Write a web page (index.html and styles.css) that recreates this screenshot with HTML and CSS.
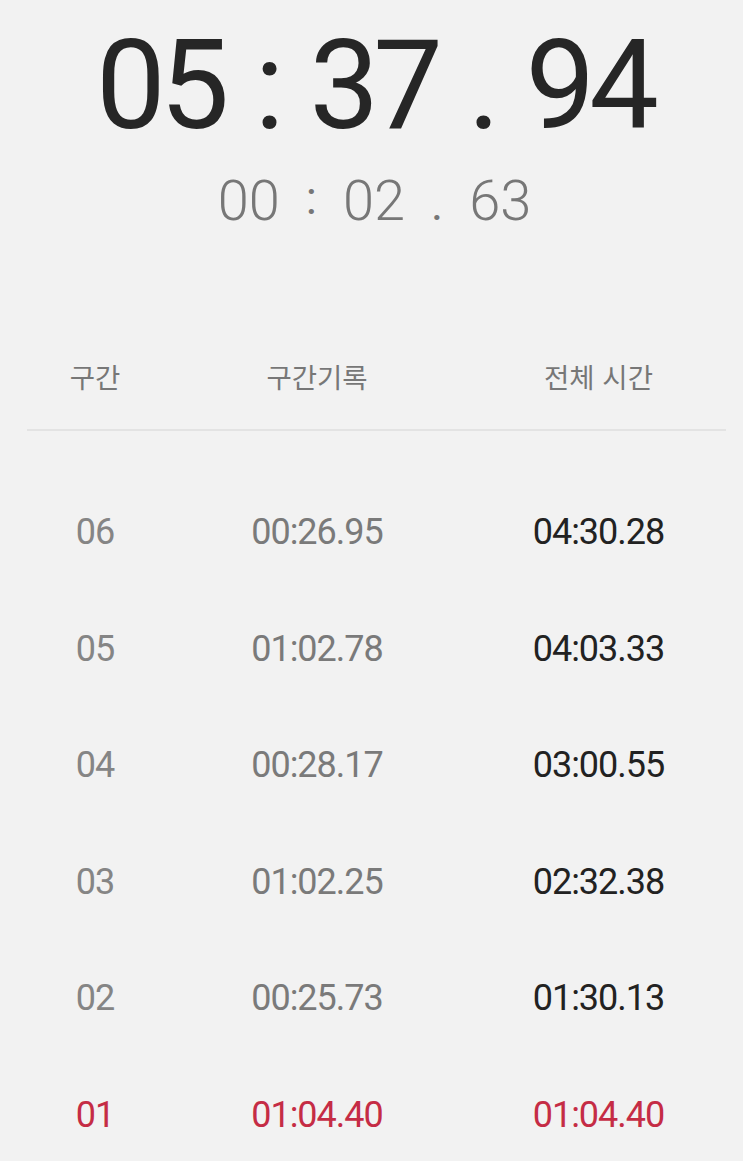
FILE: index.html
```html
<!DOCTYPE html>
<html lang="ko">
    <head>
        <meta charset="UTF-8">
        <title>Stopwatch</title>
        <link rel="stylesheet" href="styles.css">
    </head>
    <body>
        <div class="clock">
            <div class="main">
                <span>05</span><span class="sep">:</span><span>37</span><span class="sep">.</span><span>94</span>
            </div>
            <div class="lap">
                <span>00</span><span class="sep colon">:</span><span>02</span><span class="sep">.</span><span>63</span>
            </div>
        </div>

        <div class="head">
            <div>구간</div>
            <div>구간기록</div>
            <div class="total">전체 시간</div>
        </div>
        <div class="line"></div>

        <div class="list">
            <div class="row">
                <div>06</div><div>00:26.95</div><div class="total">04:30.28</div>
            </div>
            <div class="row">
                <div>05</div><div>01:02.78</div><div class="total">04:03.33</div>
            </div>
            <div class="row">
                <div>04</div><div>00:28.17</div><div class="total">03:00.55</div>
            </div>
            <div class="row">
                <div>03</div><div>01:02.25</div><div class="total">02:32.38</div>
            </div>
            <div class="row">
                <div>02</div><div>00:25.73</div><div class="total">01:30.13</div>
            </div>
            <div class="row first">
                <div>01</div><div>01:04.40</div><div class="total">01:04.40</div>
            </div>
        </div>
    </body>
</html>
```

FILE: styles.css
```css
body {
    margin: 0;
    background-color: #f2f2f2;
    font-family: Roboto, "Noto Sans CJK KR", sans-serif;
    overflow: hidden;
}
.clock {
    padding-top: 36px;
}
.main {
    display: flex;
    justify-content: center;
    gap: 31px;
    padding-left: 6px;
    font-size: 124px;
    line-height: 100px;
    color: #262626;
    letter-spacing: -6px;
}
.lap {
    height: 60px;
    text-align: center;
    font-size: 56px;
    font-weight: 300;
    line-height: 60px;
    color: #777;
    margin-top: 32px;
    padding-left: 6px;
}
.lap span {
    display: inline-block;
    margin: 0 13px;
}
.lap .sep {
    font-size: 46px;
    font-weight: 400;
}
.lap .colon {
    vertical-align: 6px;
}
.head {
    display: grid;
    grid-template-columns: 190px 254px 1fr;
    margin-top: 128px;
    font-family: "Noto Sans CJK KR", sans-serif;
    font-size: 27.5px;
    color: #777;
    text-align: center;
    line-height: 40px;
}
.total {
    padding-left: 10px;
}
.line {
    height: 2px;
    background-color: #e3e3e3;
    margin: 33px 17px 0 27px;
}
.list {
    padding-top: 43px;
}
.row {
    display: grid;
    grid-template-columns: 190px 254px 1fr;
    height: 116.5px;
    align-items: center;
    text-align: center;
    font-size: 36px;
    letter-spacing: -1px;
    color: #7a7a7a;
}
.row div:first-child {
    color: #858585;
}
.row .total {
    color: #222;
}
.row.first div,
.row.first div:first-child {
    color: #c52c45;
}
```
